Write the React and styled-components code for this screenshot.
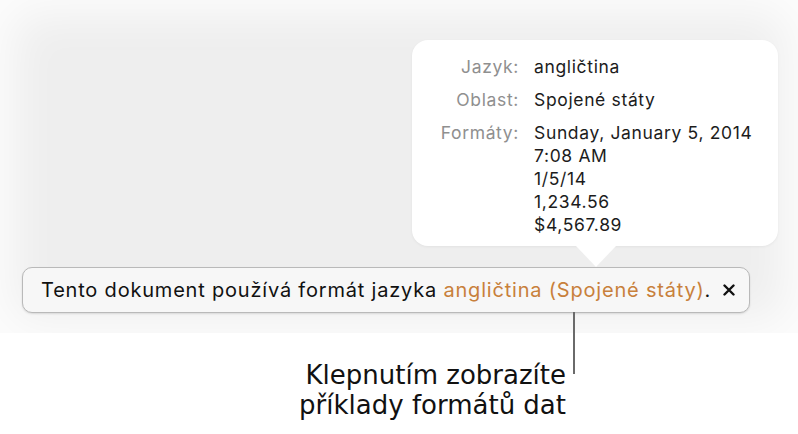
import styled, { createGlobalStyle } from "styled-components";

const GlobalStyle = createGlobalStyle`
  html, body {
    margin: 0;
    padding: 0;
    background: #ffffff;
  }
  body {
    width: 798px;
    height: 434px;
    overflow: hidden;
    font-family: Inter, "Liberation Sans", Arial, sans-serif;
  }
`;

// Zona gris de la app
const Stage = styled.div`
  height: 333px;
  box-sizing: border-box;
  padding-top: 40px;
  background: #eeeeee;
  box-shadow: inset 0 0 46px 14px rgba(255, 255, 255, 0.85);
  display: flex;
  flex-direction: column;
`;

// Globo con los formatos
const Popover = styled.div`
  position: relative;
  margin-left: 412px;
  width: 366px;
  height: 206px;
  box-sizing: border-box;
  padding: 15px 0 0 0;
  background: #ffffff;
  border-radius: 16px;
  box-shadow: 0 1px 3px rgba(0, 0, 0, 0.05);
  display: grid;
  grid-template-columns: 107px 1fr;
  column-gap: 15px;
  row-gap: 10px;
  align-content: start;
  font-size: 17.5px;
  line-height: 23px;
  letter-spacing: 0.65px;

  &::after {
    content: "";
    position: absolute;
    left: 164px;
    top: 100%;
    border-left: 20px solid transparent;
    border-right: 20px solid transparent;
    border-top: 21px solid #ffffff;
  }
`;

const Label = styled.div`
  text-align: right;
  color: #8f8f8f;
`;

const Value = styled.div`
  color: #1c1c1c;
`;

// Barra de aviso
const Notice = styled.div`
  position: relative;
  margin: 21px 0 0 22px;
  width: 728px;
  height: 46px;
  box-sizing: border-box;
  padding: 0 0 0 18px;
  display: flex;
  align-items: center;
  background: #f7f7f7;
  border: 1px solid #b9b9b9;
  border-radius: 10px;
  box-shadow: 0 1px 2px rgba(0, 0, 0, 0.12);
  font-size: 20px;
  letter-spacing: 0.8px;
  color: #111111;

  &::after {
    content: "";
    position: absolute;
    left: 550px;
    top: 100%;
    width: 2px;
    height: 62px;
    background: #6a6a6a;
  }
`;

const Message = styled.span`
  white-space: nowrap;
`;

const Accent = styled.span`
  color: #c8803b;
`;

const CloseButton = styled.button`
  margin-left: 11px;
  padding: 0;
  border: none;
  background: none;
  width: 14px;
  height: 14px;
  display: flex;
  align-items: center;
  justify-content: center;
  cursor: pointer;
`;

// Texto explicativo de abajo
const Caption = styled.div`
  width: 566px;
  box-sizing: border-box;
  padding-top: 27px;
  text-align: right;
  font-family: "DejaVu Sans", "Liberation Sans", sans-serif;
  font-size: 26px;
  line-height: 30px;
  color: #111111;
`;

const App = () => {
  return (
    <>
      <GlobalStyle />
      <Stage>
        <Popover>
          <Label>Jazyk:</Label>
          <Value>angličtina</Value>
          <Label>Oblast:</Label>
          <Value>Spojené státy</Value>
          <Label>Formáty:</Label>
          <Value>
            Sunday, January 5, 2014
            <br />
            7:08 AM
            <br />
            1/5/14
            <br />
            1,234.56
            <br />
            $4,567.89
          </Value>
        </Popover>
        <Notice>
          <Message>
            Tento dokument používá formát jazyka{" "}
            <Accent>angličtina (Spojené státy)</Accent>.
          </Message>
          <CloseButton aria-label="Zavřít">
            <svg width="12" height="12" viewBox="0 0 12 12">
              <path
                d="M1.5 1.5 L10.5 10.5 M10.5 1.5 L1.5 10.5"
                stroke="#111"
                strokeWidth="2.4"
                strokeLinecap="round"
              />
            </svg>
          </CloseButton>
        </Notice>
      </Stage>
      <Caption>
        Klepnutím zobrazíte
        <br />
        příklady formátů dat
      </Caption>
    </>
  );
};

export default App;
